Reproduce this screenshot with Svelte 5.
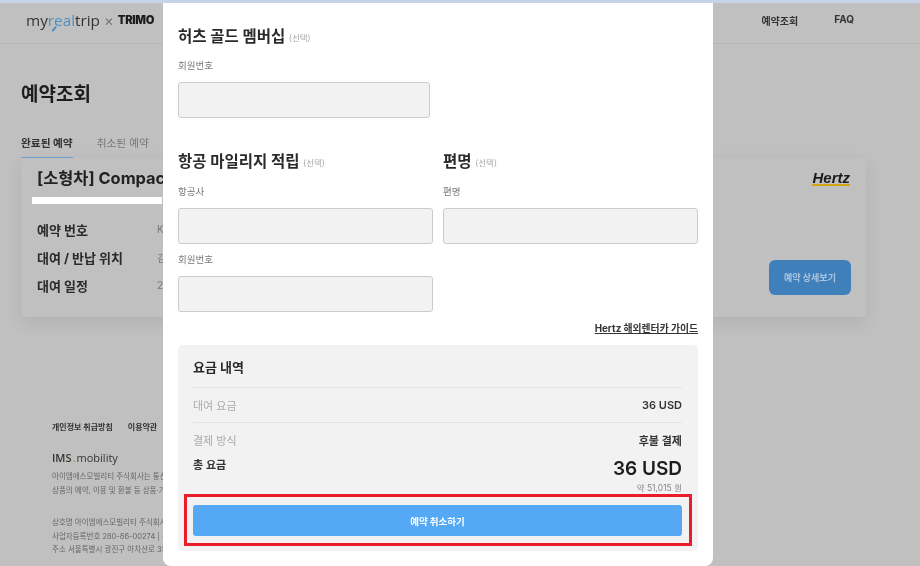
<script>
	const rows = [
		{ label: '예약 번호', value: 'KR2024' },
		{ label: '대여 / 반납 위치', value: '김포공항' },
		{ label: '대여 일정', value: '2024.05' }
	];
</script>

<div class="page">
	<header class="top">
		<div class="logo">
			<span class="my">my<span class="real">real</span>trip</span>
			<span class="times">×</span>
			<span class="trimo">TRIMO</span>
		</div>
		<nav>
			<span>예약조회</span>
			<span>FAQ</span>
		</nav>
	</header>

	<main>
		<h1>예약조회</h1>
		<div class="tabs">
			<span class="tab active">완료된 예약</span>
			<span class="tab">취소된 예약</span>
		</div>
		<section class="card">
			<div class="card-head">
				<h2>[소형차] Compact</h2>
				<span class="hertz">Hertz</span>
			</div>
			<div class="redact"></div>
			<div class="card-body">
				<dl>
					{#each rows as row}
						<div class="row">
							<dt>{row.label}</dt>
							<dd>{row.value}</dd>
						</div>
					{/each}
				</dl>
				<button class="detail">예약 상세보기</button>
			</div>
		</section>
	</main>

	<footer>
		<div class="links">
			<span>개인정보 취급방침</span>
			<span>이용약관</span>
		</div>
		<div class="ims">IMS<i>.</i><span>mobility</span></div>
		<p class="notice">
			아이엠에스모빌리티 주식회사는 통신판매중개자로서<br />
			상품의 예약, 이용 및 환불 등 상품·거래에 관한 의무와 책임은
		</p>
		<p class="notice">
			상호명 아이엠에스모빌리티 주식회사 | 대표이사<br />
			사업자등록번호 280-86-00274 | 통신판매업<br />
			주소 서울특별시 광진구 아차산로 355
		</p>
	</footer>
</div>

<div class="modal">
	<h3>허츠 골드 멤버십 <small>(선택)</small></h3>
	<label class="field-label first" for="gold">회원번호</label>
	<input id="gold" class="gold" />

	<div class="two-col">
		<div class="col">
			<h3>항공 마일리지 적립 <small>(선택)</small></h3>
			<label class="field-label" for="air">항공사</label>
			<input id="air" />
			<label class="field-label second" for="air-no">회원번호</label>
			<input id="air-no" />
		</div>
		<div class="col">
			<h3>편명 <small>(선택)</small></h3>
			<label class="field-label" for="flight">편명</label>
			<input id="flight" />
		</div>
	</div>

	<div class="guide"><span>Hertz 해외렌터카 가이드</span></div>

	<section class="price">
		<h4>요금 내역</h4>
		<div class="line bordered">
			<span class="muted">대여 요금</span>
			<b>36 USD</b>
		</div>
		<div class="line pay">
			<span class="muted">결제 방식</span>
			<b>후불 결제</b>
		</div>
		<div class="total">
			<b>총 요금</b>
			<div class="sum">
				<strong>36 USD</strong>
				<span>약 51,015 원</span>
			</div>
		</div>
		<button class="cancel">예약 취소하기</button>
	</section>
</div>

<div class="mark"></div>

<style>
	:global(body) {
		background: #c0c0c0;
		overflow: hidden;
	}

	:global(#app) {
		position: relative;
		width: 920px;
		height: 566px;
		overflow: hidden;
		filter: blur(0.5px);
		font-family: Inter, 'Noto Sans CJK KR', sans-serif;
		color: #222;
	}

	.page {
		height: 566px;
		border-top: 3px solid #c8d3e8;
		box-sizing: border-box;
		background: #c0c0c0;
	}

	.top {
		display: flex;
		justify-content: space-between;
		align-items: center;
		box-sizing: border-box;
		height: 41px;
		padding: 0 66px 6px 26px;
		border-bottom: 1px solid #b6b6b6;
	}

	.logo {
		display: flex;
		align-items: center;
		gap: 4px;
	}

	.my {
		font-family: 'Open Sans', sans-serif;
		font-size: 15.3px;
		color: #333;
	}

	.real {
		position: relative;
		color: #4a90c4;
	}

	.real::after {
		content: '';
		position: absolute;
		left: 3px;
		bottom: 1px;
		width: 6px;
		height: 1.5px;
		background: #4a90c4;
		transform: rotate(-50deg);
	}

	.times {
		font-size: 15px;
		font-weight: 300;
		color: #666;
	}

	.trimo {
		font-size: 11.2px;
		font-weight: 900;
		letter-spacing: -0.3px;
		color: #1c1c1c;
	}

	nav {
		display: flex;
		gap: 36px;
		font-size: 10px;
		font-weight: 700;
		color: #333;
	}

	main {
		padding: 0 54px 0 21px;
	}

	h1 {
		margin: 37px 0 0;
		font-size: 19px;
		line-height: 28px;
		font-weight: 700;
		color: #1e1e1e;
	}

	.tabs {
		display: flex;
		gap: 24px;
		margin-top: 23px;
		font-size: 10.7px;
		line-height: 14px;
		color: #777;
	}

	.tab {
		padding: 5px 0 6px;
	}

	.active {
		font-weight: 700;
		color: #333;
		border-bottom: 1px solid #6ba1cf;
	}

	.card {
		box-sizing: border-box;
		height: 159px;
		padding: 8px 16px 0;
		border-radius: 0 0 5px 5px;
		background: #c0c0c0;
		box-shadow: 0 6px 18px rgba(0, 0, 0, 0.08);
	}

	.card-head {
		display: flex;
		justify-content: space-between;
		align-items: center;
	}

	h2 {
		margin: 0;
		font-size: 16.4px;
		line-height: 24px;
		font-weight: 700;
		color: #222;
	}

	.hertz {
		font-family: 'Liberation Sans', sans-serif;
		font-size: 15px;
		line-height: 13px;
		font-weight: 700;
		font-style: italic;
		color: #1a1a1a;
		border-bottom: 2px solid #d4a417;
	}

	.redact {
		width: 130px;
		height: 7px;
		margin: 7px 0 0 -5px;
		background: #fff;
	}

	.card-body {
		display: flex;
		justify-content: space-between;
		align-items: flex-end;
	}

	dl {
		margin: 11px 0 0;
	}

	.row {
		display: flex;
		align-items: center;
		height: 28px;
	}

	dt {
		width: 120px;
		font-size: 13px;
		font-weight: 700;
		color: #2a2a2a;
	}

	dd {
		margin: 0;
		font-size: 10px;
		color: #777;
	}

	.detail {
		width: 82px;
		height: 35px;
		margin: 0 -1px 4px 0;
		padding: 0;
		border: 0;
		border-radius: 6px;
		background: #4080ba;
		color: #a9c6e0;
		font: inherit;
		font-size: 9px;
		font-weight: 700;
	}

	footer {
		padding: 104px 0 0 52px;
	}

	.links {
		display: flex;
		gap: 15px;
		font-size: 8px;
		line-height: 12px;
		font-weight: 700;
		color: #333;
	}

	.ims {
		margin-top: 16px;
		font-family: 'Open Sans', sans-serif;
		font-size: 11px;
		line-height: 18px;
		font-weight: 600;
		color: #333;
	}

	.ims i {
		color: #d88a2a;
		font-style: normal;
		margin: 0 1px;
	}

	.ims span {
		font-weight: 400;
	}

	.notice {
		margin: 3px 0 19px;
		font-size: 7.5px;
		line-height: 13.5px;
		color: #666;
		white-space: nowrap;
		width: 400px;
	}

	.modal {
		position: absolute;
		left: 163px;
		top: 3px;
		box-sizing: border-box;
		width: 550px;
		height: 563px;
		padding: 22px 15px 0;
		background: #fff;
		border-radius: 0 0 8px 8px;
	}

	h3 {
		height: 26px;
		margin: 0;
		font-size: 15.5px;
		line-height: 24px;
		font-weight: 700;
		color: #2a2a2a;
		white-space: nowrap;
	}

	small {
		font-size: 8.5px;
		font-weight: 400;
		color: #aaa;
		vertical-align: 1px;
	}

	.field-label {
		display: block;
		margin: 9px 0 10px;
		font-size: 9.5px;
		line-height: 13px;
		color: #777;
	}

	.field-label.first {
		margin-top: 8px;
		margin-bottom: 10px;
	}

	.field-label.second {
		margin: 9px 0 10px;
	}

	input {
		display: block;
		box-sizing: border-box;
		width: 100%;
		height: 36px;
		padding: 0 8px;
		background: #f2f2f2;
		border: 1px solid #ccc;
		border-radius: 3px;
	}

	input.gold {
		width: 252px;
	}

	.two-col {
		display: grid;
		grid-template-columns: 255px 255px;
		gap: 10px;
		margin-top: 32px;
	}

	.guide {
		margin-top: 10px;
		text-align: right;
		font-size: 9.8px;
		line-height: 14px;
		font-weight: 700;
		color: #333;
	}

	.guide span {
		text-decoration: underline;
	}

	.price {
		box-sizing: border-box;
		height: 206px;
		margin-top: 9px;
		padding: 12px 16px 0 15px;
		background: #f2f2f2;
		border-radius: 5px;
	}

	h4 {
		margin: 0;
		padding-bottom: 10px;
		font-size: 13px;
		line-height: 20px;
		font-weight: 700;
		color: #2a2a2a;
		border-bottom: 1px solid #e4e4e4;
	}

	.line {
		display: flex;
		justify-content: space-between;
		align-items: center;
		height: 34px;
		font-size: 11px;
	}

	.line.bordered {
		border-bottom: 1px solid #e4e4e4;
	}

	.line.pay {
		height: 33px;
	}

	.muted {
		color: #aaa;
	}

	.line b,
	.total b {
		font-weight: 600;
		color: #333;
	}

	.total {
		display: flex;
		justify-content: space-between;
		align-items: flex-start;
		height: 47px;
		margin-top: 2px;
		font-size: 11px;
		line-height: 14px;
	}

	.sum {
		display: flex;
		flex-direction: column;
		align-items: flex-end;
		margin-top: -1px;
	}

	.sum strong {
		font-size: 19px;
		line-height: 24px;
		font-weight: 600;
		color: #1c1c1c;
	}

	.sum span {
		font-size: 8.5px;
		line-height: 14px;
		color: #888;
	}

	.cancel {
		display: block;
		width: 100%;
		height: 31px;
		padding: 0;
		border: 0;
		border-radius: 3px;
		background: #55a8f4;
		color: #fff;
		font: inherit;
		font-size: 9.5px;
		font-weight: 700;
	}

	.mark {
		position: absolute;
		left: 184px;
		top: 494px;
		box-sizing: border-box;
		width: 508px;
		height: 52px;
		border: 3px solid #ed1c2a;
	}
</style>
